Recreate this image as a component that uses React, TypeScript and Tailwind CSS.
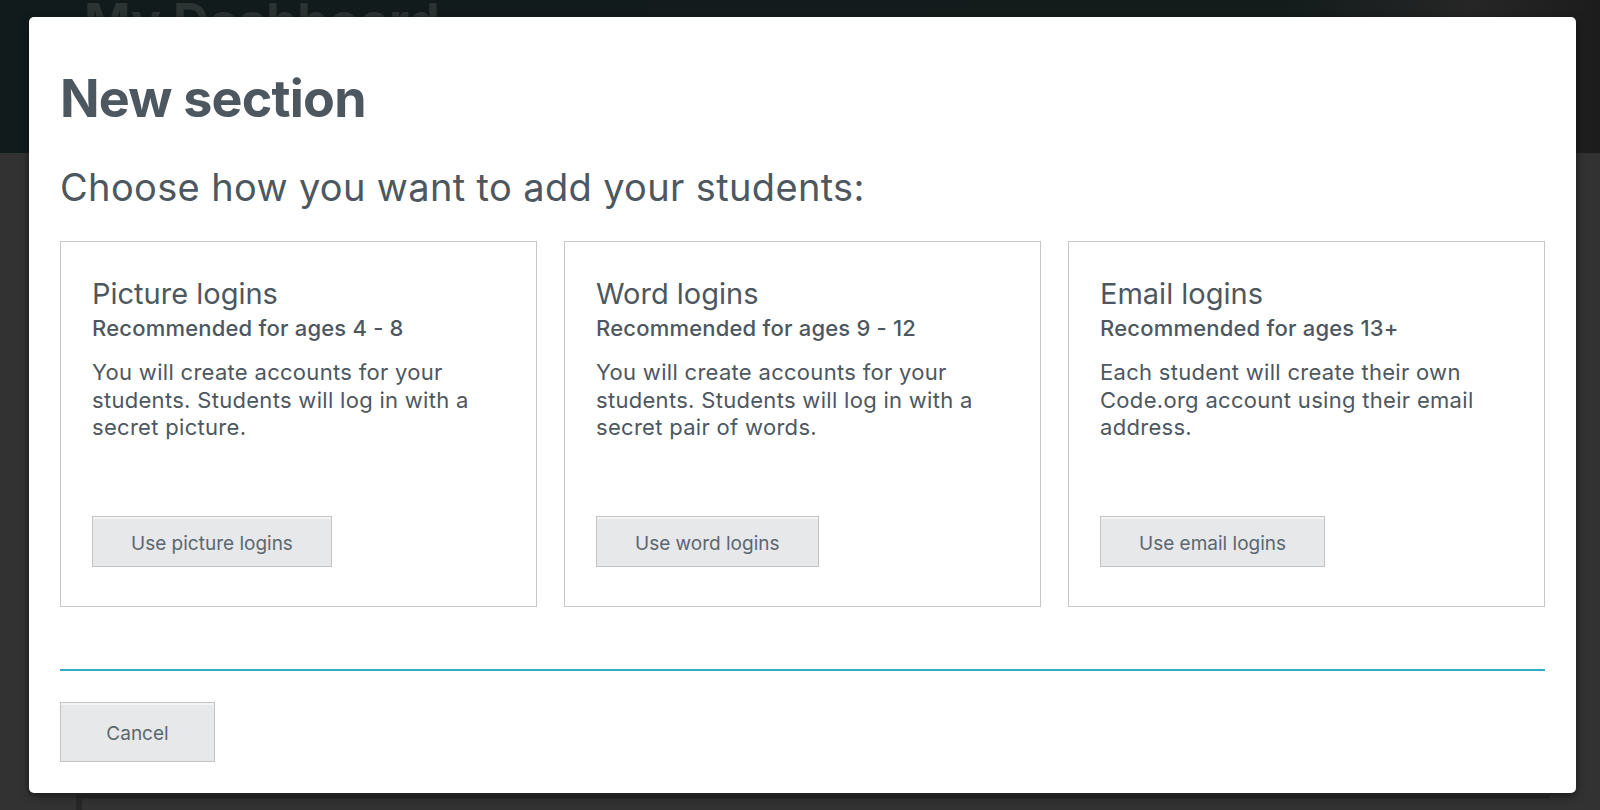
import React from "react";

const options = [
  {
    title: "Picture logins",
    ages: "Recommended for ages 4 - 8",
    description:
      "You will create accounts for your students. Students will log in with a secret picture.",
    button: "Use picture logins",
  },
  {
    title: "Word logins",
    ages: "Recommended for ages 9 - 12",
    description:
      "You will create accounts for your students. Students will log in with a secret pair of words.",
    button: "Use word logins",
  },
  {
    title: "Email logins",
    ages: "Recommended for ages 13+",
    description:
      "Each student will create their own Code.org account using their email address.",
    button: "Use email logins",
  },
];

const font = "font-['Inter','Noto_Sans',sans-serif]";

export default function App() {
  return (
    <div className={`relative h-[810px] w-[1600px] overflow-hidden bg-[#323232] ${font}`}>
      {/* dimmed page behind the dialog */}
      <div className="relative h-[153px] bg-[linear-gradient(90deg,#121b1c_0%,#131b1b_80%,#262626_92%,#1c1c1c_100%)]">
        <div className="absolute left-[84px] top-[-4px] text-[50px] font-bold leading-[50px] text-[#2b3333]">
          My Dashboard
        </div>
      </div>
      <div className="pl-[76px] pr-[50px] pt-[642px]">
        <div className="h-[40px] border-l-[6px] border-t-[4px] border-[#272727]" />
      </div>

      {/* dialog */}
      <div className="absolute left-[29px] top-[17px] flex h-[776px] w-[1547px] flex-col rounded-[5px] bg-white px-[31px] pt-[52px] shadow-[0_3px_9px_rgba(0,0,0,0.5)]">
        <h1 className="text-[52px] font-bold leading-[60px] tracking-[-0.8px] text-[#4d575f]">
          New section
        </h1>
        <h2 className="mt-[35px] text-[38px] font-normal leading-[46px] tracking-[0.35px] text-[#4d575f]">
          Choose how you want to add your students:
        </h2>

        <div className="mt-[31px] grid grid-cols-3 gap-[27px]">
          {options.map((o) => (
            <div
              key={o.title}
              className="flex h-[366px] flex-col border border-[#c6c6c6] px-[31px] pb-[39px] pt-[34px] text-[#4d575f]"
            >
              <div className="text-[29px] leading-[36px]">{o.title}</div>
              <div className="mt-[2px] text-[22px] font-medium leading-[28px] tracking-[0.2px]">
                {o.ages}
              </div>
              <p className="mt-[17px] pr-[30px] text-[22px] leading-[27.5px] tracking-[0.3px]">
                {o.description}
              </p>
              <button className="mt-auto h-[51px] self-start border border-[#c3c3c3] bg-[#e7e8ea] px-[38px] pt-[5px] text-[19px] text-[#5b6770] shadow-[inset_0_2px_0_#f4f4f4]">
                {o.button}
              </button>
            </div>
          ))}
        </div>

        <div className="mt-[62px] h-[2px] bg-[#34acbf]" />

        <button className="mt-[31px] h-[60px] w-[155px] border border-[#c3c3c3] bg-[#e7e8ea] pt-[4px] text-[19px] text-[#5b6770] shadow-[inset_0_2px_0_#f4f4f4]">
          Cancel
        </button>
      </div>
    </div>
  );
}
